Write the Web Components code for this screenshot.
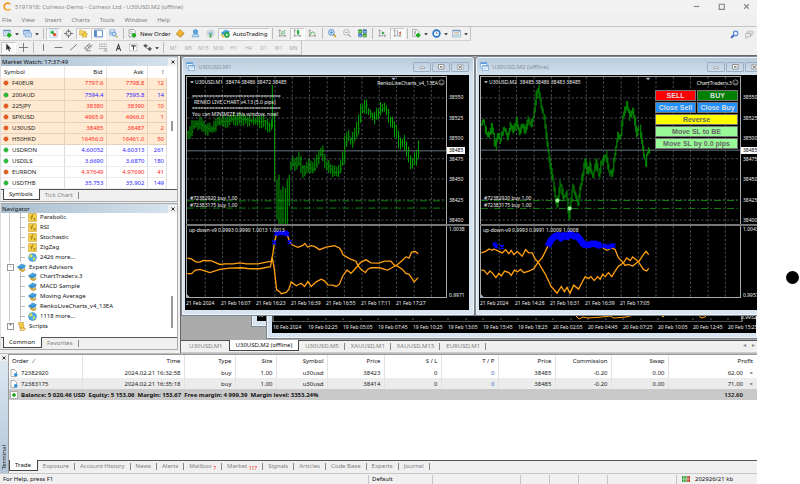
<!DOCTYPE html>
<html lang="en">
<head>
<meta charset="utf-8">
<title>5191918: Coinexx-Demo - Coinexx Ltd - U30USD,M2 (offline)</title>
<style>
html,body{margin:0;height:100%;background:#fff}
body{font:6px/8px "Noto Sans","Open Sans",sans-serif;color:#111;-webkit-text-size-adjust:none}
</style>
</head>
<body>
<trading-app></trading-app>
<script>
const reset = `*{box-sizing:border-box}button,a,input{font:inherit;color:inherit}button{background:none;border:0;padding:0;margin:0}a{text-decoration:none}`;
const define = (name, render, after) => customElements.define(name, class extends HTMLElement {
  connectedCallback() {
    if (this.shadowRoot) return;
    this.attachShadow({mode: "open"}).innerHTML = render(this).replace("<style>", "<style>" + reset);
    if (after) after(this);
  }
});

/* ---------- icons, drawn on a 16 x 16 grid ---------- */
const plus = (x, y) => `<path d="M${x} ${y - 4}v8M${x - 4} ${y}h8" stroke="#16b016" stroke-width="3.4"/>`;
const hat = `<path d="M1 6 8 1l7 3-1 5-7 3-6-3z" fill="#4ba3dc"/><path d="M1 6 8 9l7-5" stroke="#1c6ca8" fill="none"/>`;
const axes = `<path d="M3 2v12M1 12h13M11 10l3 2-3 2M1 4l2-3 2 3" stroke="#777" fill="none"/>`;
const icons = {
  logo: `<path d="M13 4A6.300 6.300 0 1 0 13 12.500" fill="none" stroke="#f7931e" stroke-width="3"/><path d="M13 12.500A6.300 6.300 0 0 1 4 13" fill="none" stroke="#f9bf62" stroke-width="3"/>`,
  newchart: `<path d="M1 2h12v10H1z" fill="#e8f2fb" stroke="#5b84b8"/><path d="M1 3h12" stroke="#5b84b8" stroke-width="2"/><path d="M3 9l3-3 2 2 3-3" stroke="#4a7bb5" fill="none"/>${plus(11, 11)}`,
  profiles: `<path d="M1 2h11v8H1z" fill="#d8e9fa" stroke="#4c86c6"/><path d="M1 3h11" stroke="#4c86c6" stroke-width="2"/><path d="M4 7h11v7H4z" fill="#e7f2fd" stroke="#4c86c6"/><path d="M6 12l2-2 2 1 3-2" stroke="#4c86c6" fill="none"/>`,
  watch: `<path d="M1.500 1.500h13v13h-13z" fill="#fff" stroke="#8ab4dd"/><path d="M6 3v6M3 6h6" stroke="#1eae3c" stroke-width="3"/><path d="M10 7v6M7 10h6" stroke="#e04828" stroke-width="3"/>`,
  target: `<circle cx="8" cy="8" r="4.500" fill="none" stroke="#666" stroke-width="1.500"/><path d="M8 0v6M8 10v6M0 8h6M10 8h6" stroke="#666" stroke-width="1.500"/>`,
  folder: `<path d="M1 2h5l1 2h5v7H1z" fill="#f7d774" stroke="#d2a52c"/><path d="m10 5 1.700 3.300 3.700.5-2.700 2.600.7 3.600-3.400-1.700L6.600 15l.7-3.600L4.600 8.800l3.700-.5z" fill="#ffd83c" stroke="#b8891a"/>`,
  panel: `<path d="M1 2h14v12H1z" fill="#fff" stroke="#3e79bd" stroke-width="1.500"/><path d="M2 3h3v10H2z" fill="#3e79bd"/>`,
  tester: `<path d="M1 1h10v10H1z" fill="#e4effb" stroke="#78a6d6"/><path d="M3 3v6M5 5v4M8 3v6" stroke="#5588c0"/><circle cx="9" cy="9" r="3.500" fill="#d5ecfc" stroke="#4b88c8" stroke-width="1.500"/><path d="m12 12 3 3" stroke="#c79a3c" stroke-width="2"/>`,
  order: `<path d="M2 1h8l3 3v10H2z" fill="#fff" stroke="#666"/><path d="M4 5h4M4 8h5" stroke="#777"/>${plus(10.5, 11)}`,
  book: `<path d="m1 8 6-7 7 6-6 7z" fill="#f4b52c" stroke="#b77a10"/><path d="m1 8 1 3 6 4 6-6V7l-6 6z" fill="#e6e0cc" stroke="#b77a10"/>`,
  person: `<circle cx="8" cy="5" r="4" fill="#58a8e4" stroke="#3782c4"/><path d="M2 14q1-6 6-5 6-1 6 5z" fill="#bcdcf4" stroke="#4a90cc"/>`,
  signal: `<circle cx="8" cy="8" r="6.500" fill="none" stroke="#b5c7d6" stroke-width="1.500"/><circle cx="8" cy="8" r="3.500" fill="#a4cde8" stroke="#7faac8"/><path d="M8 8v7" stroke="#3da83d" stroke-width="3"/>`,
  auto: `${hat}<circle cx="10.500" cy="10.500" r="5" fill="#26a641"/><path d="m9 8 4 2.500L9 13z" fill="#fff"/><path d="M0 9q2 5 6 5" stroke="#e7b22d" stroke-width="2.500" fill="none"/>`,
  bars: `${axes}<path d="M7 4v7M5 9h2M7 5h2M11 2v7M9 8h2M11 3h2" stroke="#2aa23c"/>`,
  candles: `${axes}<path d="M9 1v10" stroke="#168a26"/><path d="M7 2h4v7H7z" fill="#23b237"/>`,
  line: `${axes}<path d="M4 10Q7 1 13 9" stroke="#2aa23c" fill="none" stroke-width="1.500"/>`,
  zoomin: `<path d="m9 9 5 5" stroke="#cfa02c" stroke-width="3"/><circle cx="6" cy="6" r="5" fill="#dff0fc" stroke="#3978c0" stroke-width="1.500"/><path d="M6 3.500v5M3.500 6h5" stroke="#3978c0" stroke-width="1.500"/>`,
  zoomout: `<path d="m9 9 5 5" stroke="#bbb" stroke-width="3"/><circle cx="6" cy="6" r="5" fill="#f4f4f4" stroke="#aaa" stroke-width="1.500"/><path d="M3.500 6h5" stroke="#999" stroke-width="1.500"/>`,
  tile: `<path d="M1 2h6v5H1zM9 9h6v5H9z" fill="#7fc96b" stroke="#2f8f2a"/><path d="M9 2h6v5H9zM1 9h6v5H1z" fill="#8bb8ea" stroke="#295fae"/><path d="M1 2h6M9 9h6" stroke="#2f8f2a" stroke-width="2"/><path d="M9 2h6M1 9h6" stroke="#295fae" stroke-width="2"/>`,
  scroll: `${axes}<path d="m7 4 5 3-5 3z" fill="#21a636"/>`,
  shift: `${axes}<path d="M8 2v9" stroke="#4b78b5"/><path d="m14 4-4 3 4 3z" fill="#d4532d"/>`,
  indic: `<path d="M1 1h8l3 3v9H1z" fill="#fff" stroke="#777"/><path d="M5 11V4h3M4 7h3" stroke="#555" fill="none"/>${plus(11, 11)}`,
  clock: `<circle cx="8" cy="8" r="6" fill="#f6fbff" stroke="#2c76c4" stroke-width="3"/><path d="M8 4v4h3" fill="none" stroke="#456"/>`,
  templ: `<path d="M1 2h14v12H1z" fill="#eaf3fc" stroke="#6d93bd"/><path d="M1 3h14" stroke="#6d93bd" stroke-width="2"/><path d="m3 8 3-2 3 1 4-2" stroke="#c85a3c" fill="none"/><path d="m3 12 3-2 3 1 4-2" stroke="#3f9f4c" fill="none"/>`,
  search: `<path d="m7 9-5 5" stroke="#2859b8" stroke-width="3"/><circle cx="10" cy="6" r="4" fill="#e6f0fd" stroke="#5b8ad8" stroke-width="2"/>`,
  chat: `<path d="M5 2h8q2 0 2 3t-2 3h-1v3L9 8H5z" fill="#ddd" stroke="#aaa"/><path d="M2 6h6q2 0 2 3t-2 3H5l-3 3v-3Q0 12 0 9t2-3z" fill="#ececec" stroke="#888"/>`,
  cursor: `<path d="M4 1v12l3-3 2 5 2-1-2-4h4z" fill="#333"/>`,
  cross: `<path d="M8 0v16M0 8h16" stroke="#666" stroke-width="1.500"/>`,
  vline: `<path d="M8 2v12" stroke="#666" stroke-width="1.500"/>`,
  hline: `<path d="M1 8h14" stroke="#666" stroke-width="1.500"/>`,
  trend: `<path d="M2 13 14 2" stroke="#666" stroke-width="1.500"/>`,
  channel: `<path d="M0 10 10 1M3 13 15 3M2 8l4 6M6 4l4 6M9 2l4 6M5 14h7" stroke="#555" stroke-width="1.200" fill="none"/>`,
  fibo: `<path d="M0 2h15M0 6h15M0 10h15M8 14h7M12 10v5" stroke="#555" stroke-dasharray="2 1"/>`,
  textA: `<path d="M4 14 8 3l4 11M5 10h6" stroke="#444" stroke-width="2" fill="none"/>`,
  label: `<path d="M1 2h13v12H1z" fill="#fff" stroke="#777" stroke-dasharray="2 1"/><path d="M4 5h8M8 5v7" stroke="#444" stroke-width="2"/>`,
  shapes: `<path d="m1 5 3-3 4 3-3 3zM9 10l3-3 3 3-3 4zM5 8l5 4" fill="#555" stroke="#555"/>`,
  drop: `<path d="M3 6h10l-5 5z" fill="#222"/>`,
  win: `<path d="M1 1h11v9H1z" fill="#fff" stroke="#5c9ad6"/><path d="M1 2h11" stroke="#5c9ad6" stroke-width="3"/><path d="M4 6h11v9H4z" fill="#fff" stroke="#4a8ccc"/><path d="M4 7h11" stroke="#5c9ad6" stroke-width="2"/><path d="m6 13 2-3 2 2 3-2" stroke="#4a8ccc" fill="none"/>`,
  up: `<path d="M8 2v12M2 8h12" stroke="#168f22" stroke-width="7"/><path d="M8 3v10M3 8h10" stroke="#2fc43c" stroke-width="4"/>`,
  down: `<path d="M8 2v12M2 8h12" stroke="#b8400f" stroke-width="7"/><path d="M8 3v10M3 8h10" stroke="#f0601f" stroke-width="4"/>`,
  func: `<path d="M1 1h14v14H1z" fill="#f6d24b" stroke="#c99a20"/><path d="M10 3Q7 2 7 6L6 12M4 7h5M10 9l3 4M13 9l-3 4" stroke="#775200" fill="none"/>`,
  globe: `<circle cx="8" cy="8" r="7" fill="#52aeea" stroke="#2e82c0"/><path d="M3 3q5-2 5 2t-3 3-3-2zM9 8q5-1 4 3l-4 3z" fill="#d2e04a"/>`,
  ea: `${hat}<path d="M4 10q0 5 7 5 4-1 3-5-2 3-5 2z" fill="#e8bd3c" stroke="#a87a14"/>`,
  script: `<path d="M3 1h9q-2 2 0 4v6H5V5Q1 5 3 1z" fill="#f4cd48" stroke="#b88a1c"/><path d="M6 11h9q0 4-4 4H5q3-1 1-4z" fill="#ffe38a" stroke="#b88a1c"/>`,
  doc: `<path d="M2 1h7l4 4v10H2z" fill="#fff" stroke="#666"/><circle cx="11.500" cy="11.500" r="3.500" fill="#2b8fd8"/>`,
  bal: `<path d="M1 1h14v14H1z" fill="#fff" stroke="#777"/><path d="M8 4v8M4 8h8" stroke="#16a01c" stroke-width="3"/>`,
  net: `<path d="M0 2h10v12H0z" fill="#2f9a35"/><path d="M10 2h6v12h-6z" fill="#c83a2a"/><path d="M3 2v12M6 2v12M9 2v12M12 2v12M0 8h16" stroke="#e8f4d8"/>`,
  smile: `<circle cx="8" cy="8" r="6" fill="none" stroke="#ccc" stroke-width="1.500"/><path d="M5 6h1M10 6h1M5 10q3 2 6 0" stroke="#ccc" stroke-width="1.500" fill="none"/>`,
  min: `<path d="M3 8h10" stroke="#888" stroke-width="2"/>`,
  max: `<path d="M4 4h9v9H4z" fill="none" stroke="#888" stroke-width="2"/>`,
  close: `<path d="m4 4 8 8M12 4l-8 8" stroke="#888" stroke-width="2"/>`,
  shut: `<path d="m4 4 8 8M12 4l-8 8" stroke="#222" stroke-width="2.500"/>`,
  wmin: `<path d="M4 8h9v3H4z" fill="#fff" stroke="#777"/>`,
  wmax: `<path d="M3 3h11v9H3z" fill="#fff" stroke="#777" stroke-width="1.500"/><path d="M6 6h5v3H6z" fill="#777"/>`,
  wclose: `<path d="M3 3h11v10H3z" fill="#eee" stroke="#888"/><path d="m5 5 7 6M12 5l-7 6" stroke="#777" stroke-width="2"/>`
};
define("mt-icon", el => `<style>:host{display:inline-block;width:9px;height:9px;flex:none}svg{display:block;width:100%;height:100%}</style>
<svg viewBox="0 0 16 16" aria-hidden="true">${icons[el.getAttribute("name")]}</svg>`);
const ic = (n, cls = "") => `<mt-icon name="${n}" class="${cls}"></mt-icon>`;

/* ---------- title and menus ---------- */
define("title-bar", () => `<style>:host{display:flex;align-items:center;height:13px;background:#f2f2f2;color:#888;padding:0 0 0 3px;gap:3px}
span{flex:1;white-space:nowrap}button{width:22px;height:12px;display:grid;place-items:center}mt-icon{width:9px;height:9px}</style>
${ic("logo")}<span>5191918: Coinexx-Demo - Coinexx Ltd - U30USD,M2 (offline)</span>
<button aria-label="Minimize">${ic("min")}</button><button aria-label="Maximize">${ic("max")}</button><button aria-label="Close" >${ic("close")}</button>`);

define("menu-bar", () => `<style>:host{display:block;height:14px;background:#f0f0f0;border-bottom:1px solid #c4c4c4;color:#808080}
nav{display:flex;gap:10px;padding:3px 2px}button{line-height:8px}</style>
<nav>${["File","View","Insert","Charts","Tools","Window","Help"].map(t => `<button>${t}</button>`).join("")}</nav>`);

/* ---------- tool bars: "|" is a divider, "*" a pressed button, "+" adds a drop arrow ---------- */
define("tool-bar", el => `<style>:host{display:flex;height:14px;background:#f0f0f0}
.g{display:flex;align-items:center;border-right:1px solid #c2c2c2;border-bottom:1px solid #d0d0d0;padding-left:1px}
button{width:15px;height:12px;display:flex;align-items:center;justify-content:center;flex:none;white-space:nowrap;color:#111}
.d{width:20px}.d mt-icon+mt-icon{width:6px;height:6px;margin-left:2px}
.p{background:#f9f9f9;border:1px solid #c8c8c8;border-right-color:#fff;border-bottom-color:#fff}
i{width:1px;height:11px;background:#bbb;margin:0 2px}
.w{width:auto;gap:3px;padding:0 2px}.t{color:#aaa;font-size:5px}
.r{margin-left:auto;display:flex;align-items:center}</style>
<div class="g">${el.getAttribute("items").split(" ").map(k => {
  if (k === "|") return "<i></i>";
  const p = k.startsWith("*"), d = k.endsWith("+"), t = k.startsWith("~"), [n, lab] = k.replace(/[*+~]/g, "").split(":");
  return `<button class="${p ? "p " : ""}${d ? "d " : ""}${lab ? "w " : ""}${t ? "t" : ""}" aria-label="${(lab || n).replace("_", " ")}">${t ? n : ic(n)}${lab ? `<span>${lab.replace("_", " ")}</span>` : ""}${d ? ic("drop") : ""}</button>`;
}).join("")}</div>${el.hasAttribute("tail") ? `<div class="r"><button aria-label="Search">${ic("search")}</button><button aria-label="Chat">${ic("chat")}</button></div>` : ""}`);

/* ---------- tab strip ---------- */
define("tab-strip", el => `<style>:host{display:flex;background:#f0f0f0;border-top:1px solid #555;height:12px;color:#808080;padding-left:var(--tab-start,2px)}
button{height:10px;line-height:9px;padding:0 6px 0 var(--tab-pad,5px);white-space:nowrap;position:relative}
button:not([aria-selected=true])::after{content:"";position:absolute;right:0;top:2px;height:7px;border-right:1px solid #888}
button.lead::after{display:none}
[aria-selected=true]{background:#fff;color:#111;border:1px solid #444;border-top:0;margin-top:-1px;height:11px}
small{color:#f22;font-size:5px;vertical-align:-2px;line-height:5px}.r{margin-left:auto;color:#888}</style>
${el.getAttribute("tabs").split("|").map((t, i) => { const on = i == (el.getAttribute("active") || 0), [a, n] = t.split("^");
return `<button role="tab" aria-selected="${on}" class="${i + 1 == el.getAttribute("active") ? "lead" : ""}">${a}${n ? ` <small>${n}</small>` : ""}</button>`; }).join("")}
<span class="r"><slot></slot></span>`);

define("dock-panel", el => `<style>:host{display:flex;flex-direction:column;background:#fff;border:1px solid #aaa;border-left-color:#ddd}
header{display:flex;align-items:center;height:9px;background:linear-gradient(90deg,#a9bfd0,#d8e4ee);padding-left:1px;color:#111}
header span{flex:1;line-height:8px}header button{width:9px;height:8px;background:#f0f0f0;display:grid;place-items:center}mt-icon{width:6px;height:6px}
main{flex:1;display:grid;position:relative;align-content:start}main::after{content:"";position:absolute;right:4px;width:2px;height:var(--thumb-h);top:var(--thumb-y);background:#999}</style>
<header><span>${el.getAttribute("label")}</span><button aria-label="Close">${ic("shut")}</button></header><main><slot></slot></main>
<tab-strip tabs="${el.getAttribute("tabs")}"></tab-strip>`);

const quotes = `F40EUR 7797.6 7798.8 12 d|200AUD 7594.4 7595.8 14 u|225JPY 38380 38390 10 d|SPXUSD 4965.9 4966.0 1 d|U30USD 38485 38487 2 d|H50HKD 16456.0 16461.0 50 d|USDRON 4.60052 4.60313 261 u|USDILS 3.6690 3.6870 180 u|EURRON 4.97649 4.97690 41 d|USDTHB 35.753 35.902 149 u`.split("|").map(r => r.split(" "));
define("market-watch", () => `<style>:host{display:block;padding-right:10px}
table{width:100%;border-collapse:collapse;table-layout:fixed}
th{font-weight:400;height:12px;text-align:right;padding:0 3px;color:#222}th:first-child{text-align:left;width:63px}th:nth-child(2){width:42px}th:nth-child(3){width:41px}
td{height:11px;padding:0 2px 0 0;text-align:right;border-right:1px solid #ddd;border-bottom:1px solid #ececec;line-height:8px}
th+th{border-left:1px solid #e4e4e4}
td:first-child{color:#222;text-align:left;padding-left:2px}td mt-icon{width:6px;height:6px;margin-right:3px;vertical-align:-1px}
tr.o td{background:#ffe9d0;border-color:#e3d2bd}tr.d{color:#ff2a1e}tr.u{color:#2b24ff}</style>
<table><thead><tr><th>Symbol</th><th>Bid</th><th>Ask</th><th>!</th></tr></thead><tbody>
${quotes.map(([s,b,a,n,k], i) => `<tr class="${k} ${i < 6 ? "o" : ""}"><td>${ic(k == "u" ? "up" : "down")}${s}</td><td>${b}</td><td>${a}</td><td>${n}</td></tr>`).join("")}</tbody></table>`);

define("nav-tree", () => `<style>:host{display:block}
ul{list-style:none;margin:0;padding:0;display:grid;grid-template-rows:repeat(12,minmax(0,1fr));height:118px}
li{display:flex;align-items:center;gap:3px;padding-left:19px;color:#111;white-space:nowrap;line-height:9px;min-height:0}
li::before{content:"";width:5px;height:1px;background:#bbb}
li:not(.root){background:linear-gradient(#bbb,#bbb) 19px 0/1px 100% no-repeat,linear-gradient(#ccc,#ccc) 8px 0/1px 100% no-repeat}
.root{padding-left:6px}.root::before{content:attr(data-s);background:#fff;width:5px;height:5px;border:1px solid #999;font-size:5px;line-height:3px;text-align:center;color:#444}
</style><ul>
${[["func","Parabolic"],["func","RSI"],["func","Stochastic"],["func","ZigZag"],["globe","2426 more..."],["ea","Expert Advisors","-"],["ea","ChartTrader.v.3"],["ea","MACD Sample"],["ea","Moving Average"],["ea","RenkoLiveCharts_v4_13EA"],["globe","1118 more..."],["script","Scripts","+"]].map(([i,t,r]) => `<li ${r ? `class="root" data-s="${r}"` : ""}>${ic(i)}${t}</li>`).join("")}</ul>`);

/* ---------- charts ---------- */
const pts = s => s.trim().split(/\s+/).map(p => p.split(",").map(Number));
const seeded = s => () => (s = (s * 16807) % 2147483647) / 2147483647;
const at = (a, x) => { let i = 1; while (i < a.length - 1 && a[i][0] < x) i++; const [p, q] = [a[i - 1], a[i]]; return p[1] + (q[1] - p[1]) * (x - p[0]) / (q[0] - p[0]); };
const data = {
  m1: {
    ohlc: "U30USD,M1&nbsp; 38474 38486 38472 38485", ea: "RenkoLiveCharts_v4_13EA", step: 6, amp: 17, orders: [434, 456], price: 283,
    main: "24,228 32,235 42,210 50,200 62,202 75,212 90,220 102,215 115,198 130,194 145,194 160,187 180,186 200,190 220,193 240,195 255,193 268,208 274,205 277,205",
    rest: "334,330 345,320 355,330 364,308 375,355 385,325 398,340 408,338 420,300 430,285 440,320 462,350 480,348 495,310 505,235 520,258 535,230 552,155 562,145 570,165 585,185 600,165 612,155 626,160 634,190 648,210 665,260 680,255 690,290 700,325 712,310 718,290",
    spikes: "278,84,212 285,170,376 292,370,490 298,355,528 304,400,530 310,390,520 317,395,608 323,370,530 329,355,450",
    a: "22,176 35,178 45,186 52,188 60,188 70,183 95,184 120,195 135,193 160,193 180,190 200,193 235,193 260,188 275,185 280,160 284,130 290,105 300,100 322,103 330,125 337,135 355,143 370,137 376,131 384,142 395,138 405,140 420,150 440,142 465,138 480,145 487,155 490,165 510,177 530,185 535,197 545,210 558,220 565,210 575,205 600,205 625,212 638,205 655,195 670,182 680,172 690,175 697,158 707,155 717,162",
    b: "22,223 35,223 45,213 60,210 90,220 120,210 150,206 185,205 210,208 240,208 272,202 278,175 284,210 291,272 300,278 305,284 320,280 328,270 335,248 350,260 365,252 375,262 385,247 395,262 410,248 425,240 435,245 445,257 460,258 470,262 480,255 490,230 503,212 515,222 530,205 545,188 560,181 575,190 600,191 615,185 635,185 645,197 655,200 670,210 680,222 690,225 700,240 705,248 717,235",
    blue: "", marks: "284,128 290,101 297,100 304,99 311,100 318,98 323,103 330,127",
    hi: "1.0038", lo: "0.9971", ind: "up-down-v9 0.9993 0.9990 1.0013 1.0013", times: "2024|16:07|16:23|16:39|16:55|17:11|17:27", tick: 636
  },
  m2: {
    ohlc: "U30USD,M2&nbsp; 38485 38486 38483 38485", ea: "ChartTrader.v.3", step: 3, amp: 14, orders: [433, 457], price: 281,
    main: "22,205 30,190 36,215 42,240 50,232 55,210 61,235 66,275 73,235 82,250 90,220 98,220 103,245 113,198 120,225 130,190 138,230 150,205 155,230 165,190 175,205 182,180 190,115 196,95 205,150 215,190 222,260 232,330 240,370 252,455 263,375 272,430 280,410 289,485 300,385 307,420 315,445 325,380 337,315 345,350 352,325 360,365 370,315 378,360 385,325 392,315 400,295 410,350 418,355 428,290 436,230 443,250 450,190 462,140 472,182 481,155 493,235 501,205 511,280 520,325 524,290 530,284",
    rest: "", spikes: "",
    a: "22,160 35,155 45,148 55,152 60,148 75,155 85,160 95,150 105,162 112,152 120,165 130,155 145,170 155,150 165,160 175,160 185,180 193,188 203,205 215,225 232,262 250,282 263,262 272,278 280,265 289,283 300,258 315,270 325,250 335,232 345,238 352,232 362,244 372,232 380,240 387,225 395,232 405,220 415,232 425,215 435,200 450,190 460,175 470,183 478,172 490,182 497,190 510,210 520,215 526,207",
    b: "22,212 30,213 40,225 48,215 56,222 66,235 75,222 82,230 92,215 105,220 112,228 122,212 130,218 140,210 150,220 165,215 180,208 193,188 205,175 215,155 222,140 232,118 250,104 300,105 330,135 385,142 400,152 415,145 425,150 435,175 448,188 455,198 465,195 478,200 490,190 497,185 510,165 518,155 526,165",
    blue: "222,140 232,120 245,108 255,106 262,115 270,106 280,111 289,102 300,109 310,108 320,120 330,134 345,136 355,132 365,132 375,137 384,134", marks: "62,134 67,140 84,142 391,138 399,140 407,142 414,137 420,138",
    hi: "1.0043", lo: "0.9957", ind: "up-down-v9 0.9993 0.9991 1.0009 1.0008", times: "2024|14:28|16:31|16:39|17:05", tick: 517
  }
};
const bars = (str, c, r) => { if (!str) return ""; const p = pts(str); let d = "";
  for (let x = p[0][0]; x <= p[p.length - 1][0]; x += c.step) {
    const y1 = at(p, x), y2 = at(p, x + c.step), lo = Math.min(y1, y2) - c.amp * (.3 + r()), hi = Math.max(y1, y2) + c.amp * (.3 + r());
    d += c.step > 4 ? `M${x} ${lo | 0}V${hi | 0}M${x} ${y1 | 0}h3` : `M${x} ${lo + 5 | 0}V${hi - 5 | 0}`; }
  return d; };
const vgrid = (y0, y1) => Array.from({length: 14}, (_, k) => `M${76 + Math.round(52.4 * k)} ${y0}V${y1}`).join("");
const hgrid = [121, 182, 244, 305, 366, 429, 490].map(y => `M21 ${y + 2}H801`).join("");

define("price-chart", el => { const c = data[el.getAttribute("data")], r = seeded(el.getAttribute("data") == "m1" ? 71 : 93);
return `<style>:host{display:grid;grid-template:148px 2px 72px 12px / 1fr 22px;background:#000;color:#eee;font-size:5px;line-height:6px;padding:1px 0 0 1px;white-space:nowrap;overflow:hidden}
.pane{position:relative;border-left:1px solid #aaa;border-right:1px solid #aaa}.top{border-top:1px solid #aaa}.pane.ind{border-bottom:1px solid #aaa}
svg{position:absolute;inset:0;width:100%;height:100%}
.split{grid-column:1/-1;background:#777}
.axis{display:flex;flex-direction:column;justify-content:space-between;padding:18px 0 1px 2px;position:relative}.axis.i{padding:0 0 0 2px}
.axis b{position:absolute;left:0;right:4px;top:71px;background:#fff;color:#000;font-weight:400;padding-left:2px;height:7px}
.times{grid-column:1/-1;display:flex;padding-top:2px}.times span{width:35px}
.over{position:absolute;z-index:1}.head{left:2px;top:2px;display:flex;align-items:center}.head mt-icon{width:6px;height:6px;filter:invert(1)}
.ea{right:1px;top:2px;display:flex;align-items:center}.ea mt-icon{width:7px;height:7px}
.orders{left:3px;top:118px;line-height:7px}.name{left:2px;top:1px}.note{left:5px;top:16px}.note p{margin:0}.note .s{padding-left:2px}
slot{display:block;position:absolute;z-index:2;right:2px;top:13px}</style>
<div class="pane top"><svg viewBox="21 60 780 444" preserveAspectRatio="none" fill="none">
<path d="${vgrid(60, 504)}${hgrid}" stroke="#6a7580" stroke-width="2" stroke-dasharray="7 6"/>
<path d="M21 ${c.price}H801" stroke="#66747f" stroke-width="3"/>
<path d="M21 ${c.orders[0]}H801M21 ${c.orders[1]}H801" stroke="#128012" stroke-width="3" stroke-dasharray="21 7 4 7"/>
<path d="${bars(c.main, c, r)}${bars(c.rest, c, r)}${pts(c.spikes || "0,0,0").map(([x, a, b]) => `M${x} ${a}V${b || a}`).join("")}" stroke="${c.step > 4 ? "#00a800" : "#009c00"}" stroke-width="3"/>
<path d="M${c.tick} 62h14l-7 8z" fill="#9fb0c8"/>
${c.step < 4 ? '<circle cx="251" cy="433" r="5" fill="#7f7" stroke="#dfd" stroke-width="2"/><circle cx="288" cy="457" r="5" fill="#7f7" stroke="#dfd" stroke-width="2"/>' : ""}
</svg>
<div class="over head">${ic("drop")}<span>${c.ohlc}</span></div><div class="over ea"><span>${c.ea}</span>${ic("smile")}</div>
${c.step > 4 ? `<div class="over note"><p>===============================</p><p class="s">RENKO LIVE CHART v4.13 (5.0 pips)</p><p>===============================</p><p>You can MINIMIZE this window, now!</p></div>` : ""}
<div class="over orders">#72382920 buy 1.00<br>#72383175 buy 1.00</div><slot></slot></div>
<div class="axis">${[38550,38525,38500,38475,38450,38425,38400].map(v => `<span>${v}</span>`).join("")}<b>38485</b></div>
<div class="split"></div>
<div class="pane ind"><svg viewBox="21 78 780 216" preserveAspectRatio="none" fill="none">
<path d="${vgrid(78, 294)}" stroke="#6a7580" stroke-width="2" stroke-dasharray="7 6"/>
<path d="M${c.a}" stroke="#ffa010" stroke-width="4"/><path d="M${c.b}" stroke="#ffa010" stroke-width="4"/>
${c.blue ? `<path d="M${c.blue}" stroke="#00f" stroke-width="20" stroke-linejoin="round"/>` : ""}
<path d="${pts(c.marks).map(([x, y]) => `M${x - 6} ${y - 6}l12 12M${x + 6} ${y - 6}l-12 12M${x} ${y - 6}v12`).join("")}" stroke="#00f" stroke-width="4"/>
<path d="M21 286l8 8h-8z" fill="#9fb0c8"/></svg>
<div class="over name">${c.ind}</div></div>
<div class="axis i"><span>${c.hi}</span><span>${c.lo}</span></div>
<div class="times">${c.times.split("|").map(t => `<span>21 Feb ${t}</span>`).join("")}</div>`; });

define("trade-panel", () => `<style>:host{display:grid;grid-template-columns:1fr 1fr;grid-auto-rows:11px;gap:1px;width:83px;font:bold 7px/9px "Liberation Sans",Arial,sans-serif}
button{border:1px solid #777;color:#ddd;white-space:nowrap}.wide{grid-column:1/-1}
.sell{background:#f00}.buy{background:#008000}.cl{background:#1e90ff}.rev{background:#ff0;color:#666}.mv{background:#98fb98;color:#666}</style>
<button class="sell">SELL</button><button class="buy">BUY</button><button class="cl">Close Sell</button><button class="cl">Close Buy</button>
<button class="wide rev">Reverse</button><button class="wide mv">Move SL to BE</button><button class="wide mv">Move SL by 0.0 pips</button>`);

define("chart-window", el => `<style>:host{display:block;background:linear-gradient(#b9cadb,#d5e2ee 18px,#d8e5f1);border:1px solid #eef4fa;border-radius:3px 3px 0 0;padding:0 4px 4px 2px;box-shadow:0 0 0 1px #7d868f}
header{display:flex;align-items:center;height:17px;gap:2px;color:#85919c}header span{flex:1;padding-left:1px}
header button{width:18px;height:10px;border:1px solid #9dafc2;display:grid;place-items:center;border-radius:1px;margin-left:-1px}header mt-icon{width:8px;height:8px}header>mt-icon{width:9px;height:9px;margin-left:1px}</style>
<header>${ic("win")}<span>${el.getAttribute("label")}</span><button aria-label="Minimize">${ic("wmin")}</button><button aria-label="Maximize">${ic("wmax")}</button><button aria-label="Close">${ic("wclose")}</button></header><slot></slot>`);

/* lower edge of a chart window that lies under others */
define("window-edge", el => `<style>:host{display:block;background:#d8e5f1;border:1px solid #eef4fa;border-top:0;box-shadow:0 0 0 1px #7d868f;padding:0 0 4px 4px}
div{background:#000;color:#eee;font-size:5px;line-height:6px;height:100%;position:relative;display:flex;flex-direction:column;justify-content:flex-end;overflow:hidden}
svg{display:block;height:12px;width:491px;flex:none}
p{margin:2px 0 3px 1px;display:flex;white-space:nowrap}p span{width:35px;flex:none}b{font-weight:400;position:absolute;right:0;top:4px;width:15px}</style>
<div>${el.hasAttribute("small") ? `<p><span>15</span></p>` : `<svg viewBox="0 0 491 12" fill="none"><path d="M19 0v11M36 0v11M54 0v11M71 0v11M89 0v11M106 0v11M124 0v11M141 0v11M159 0v11M176 0v11M194 0v11M211 0v11M229 0v11M246 0v11M264 0v11M281 0v11M299 0v11M316 0v11M334 0v11M351 0v11M369 0v11M386 0v11M404 0v11M421 0v11M439 0v11M456 0v11" stroke="#58636d" stroke-dasharray="2 2"/><path d="M1 0v12h469V0" stroke="#aaa"/><path d="M303 5l4 4 4-2 5 1 14-1 8-1 4 2 12-1 8-2M389 5l2 2 2-2M426 4l3 4 4-1 3-3" stroke="#ffa010"/></svg><b>0.9952</b>
<p>${"16 Feb 2024|19 Feb 02:25|19 Feb 05:05|19 Feb 07:45|19 Feb 10:25|19 Feb 13:05|19 Feb 15:45|19 Feb 18:25|20 Feb 02:05|20 Feb 04:45|20 Feb 07:25|20 Feb 10:05|20 Feb 12:45|20 Feb 15:25".split("|").map(t => `<span>${t}</span>`).join("")}</p>`}</div>`);

define("chart-desk", () => `<style>:host{display:flex;flex-direction:column;min-width:0;border-left:1px solid #666}
main{flex:1;background:#ababab;position:relative;overflow:hidden}
chart-window,window-edge{position:absolute}
.w1{left:1px;top:1px;width:292px}.w2{left:295px;top:1px;width:292px}
.e1{left:71px;top:246px;width:220px;height:24px}.e2{left:86px;top:254px;right:0;height:28px}
tab-strip{--tab-start:2px;--tab-pad:6px;height:13px;border-bottom:1px solid #ccc}</style>
<main><window-edge small class="e1"></window-edge><window-edge class="e2"></window-edge>
<chart-window class="w1" label="U30USD,M1"><price-chart data="m1"></price-chart></chart-window>
<chart-window class="w2" label="U30USD,M2 (offline)"><price-chart data="m2"><trade-panel></trade-panel></price-chart></chart-window></main>
<tab-strip active="1" tabs="U30USD,M1|U30USD,M2 (offline)|U30USD,M5|XAUUSD,M1|XAUUSD,M15|EURUSD,M1">◂ &nbsp; &nbsp;▸&nbsp;</tab-strip>`);

/* ---------- terminal ---------- */
define("trade-terminal", () => `<style>:host{display:grid;grid-template-columns:8px 1fr;background:#f0f0f0;border-top:1px solid #bbb}
aside{background:linear-gradient(#dfe9f2,#b2c6d8);display:flex;flex-direction:column;justify-content:space-between;align-items:center}
aside button{width:8px;height:7px;background:#f0f0f0;display:grid;place-items:center}aside mt-icon{width:6px;height:6px}
aside span{writing-mode:vertical-rl;transform:rotate(180deg);line-height:8px;color:#222;padding-top:3px}
section{display:flex;flex-direction:column;background:#fff;border-left:1px solid #999;border-top:1px solid #999;min-width:0}
.body{flex:1}
table{width:100%;border-collapse:collapse;table-layout:fixed}
th,td{font-weight:400;text-align:right;padding:0 3px;border-right:1px solid #e2e2e2;line-height:8px;white-space:nowrap}
th{height:12px}td{height:11px;color:#222}th:first-child,td:first-child{text-align:left}
th:last-child,td:last-child{border-right:0}th:last-child{padding-right:4px}
td mt-icon{width:8px;height:8px;vertical-align:-2px;margin:0 3px 0 -2px}
.alt td{background:#ececec}.sum td{background:#c9c9c9;font-weight:700;color:#111;border:0}
.n{padding-right:4px}.n i{font-style:normal;color:#444;display:inline-block;width:10px;text-align:right}.sum td:last-child{font-weight:600;padding-right:14px}.tp{color:#36c}</style>
<aside><button aria-label="Close">${ic("shut")}</button><span>Terminal</span></aside>
<section><div class="body"><table>
<colgroup><col style="width:73px"><col style="width:102px"><col style="width:51px"><col style="width:41px"><col style="width:51px"><col style="width:57px"><col style="width:57px"><col style="width:57px"><col style="width:57px"><col style="width:56px"><col style="width:57px"><col></colgroup>
<thead><tr>${["Order &nbsp; ⁄","Time","Type","Size","Symbol","Price","S / L","T / P","Price","Commission","Swap","Profit"].map(t => `<th>${t}</th>`).join("")}</tr></thead>
<tbody>${[["72382920","2024.02.21 16:32:58","buy","1.00","u30usd","38423","0","0","38485","-0.20","0.00","62.00"],["72383175","2024.02.21 16:35:18","buy","1.00","u30usd","38414","0","0","38485","-0.20","0.00","71.00"]].map((r, i) => `<tr class="${i ? "alt" : ""}">${r.map((v, j) => `<td class="${j == 11 ? "n" : j == 7 ? "tp" : ""}">${j ? "" : ic("doc")}${v}${j == 11 ? "<i>×</i>" : ""}</td>`).join("")}</tr>`).join("")}
<tr class="sum"><td colspan="11">${ic("bal")}Balance: 5 020.46 USD&nbsp; Equity: 5 153.06&nbsp; Margin: 153.67&nbsp; Free margin: 4 999.39&nbsp; Margin level: 3353.24%</td><td>132.60</td></tr></tbody></table></div>
<tab-strip style="--tab-start:0px;height:13px" tabs="Trade|Exposure|Account History|News|Alerts|Mailbox^7|Market^117|Signals|Articles|Code Base|Experts|Journal"></tab-strip></section>`);

define("status-bar", () => `<style>:host{display:grid;grid-template-columns:369px 64px 88px 29px 29px 29px 1fr 80px;height:11px;background:#f0f0f0;border-top:1px solid #c8c8c8;padding-top:1px;line-height:9px;color:#111}
span{border-right:1px solid #c4c4c4;padding-left:3px;white-space:nowrap}span:first-child{padding-left:0}span:last-child{border:0}mt-icon{width:12px;height:8px;vertical-align:-2px;margin-right:3px}</style>
<span>For Help, press F1</span><span>Default</span><span></span><span></span><span></span><span></span><span></span><span>${ic("net")}202926/21 kb</span>`);

define("trading-app", () => `<style>:host{display:grid;grid-template-columns:1fr 43px;height:100vh;min-height:484px;overflow:hidden}
.app{display:flex;flex-direction:column;min-width:0;background:#f0f0f0;overflow:hidden}
.work{flex:1;display:grid;grid-template-columns:180px 1fr;border-top:1px solid #666;min-height:0}
.dock{display:flex;flex-direction:column;gap:1px;padding:0 2px 3px 0}
.mw{--thumb-y:55px;--thumb-h:10px;height:146px}.nav{--thumb-y:83px;--thumb-h:32px;flex:1}
trade-terminal{height:120px}
.side{display:grid;justify-items:center}.side i{width:13px;height:13px;border-radius:50%;background:#000;margin:271px 0 0 28px}</style>
<div class="app"><title-bar></title-bar><menu-bar></menu-bar>
<tool-bar tail items="newchart+ profiles+ | *watch target *folder *panel tester | order:New_Order book person signal *auto:AutoTrading | bars *candles line | zoomin zoomout tile | scroll *shift | indic+ clock+ templ+"></tool-bar>
<tool-bar items="*cursor cross | vline hline trend channel fibo textA label shapes+ | ~M1 ~M5 ~M15 ~M30 ~H1 ~H4 ~D1 ~W1 ~MN"></tool-bar>
<div class="work"><div class="dock"><dock-panel class="mw" label="Market Watch: 17:37:49" tabs="Symbols|Tick Chart"><market-watch></market-watch></dock-panel>
<dock-panel class="nav" label="Navigator" tabs="Common|Favorites"><nav-tree></nav-tree></dock-panel></div><chart-desk></chart-desk></div>
<trade-terminal></trade-terminal><status-bar></status-bar></div><div class="side"><i></i></div>`);
</script>
</body>
</html>
